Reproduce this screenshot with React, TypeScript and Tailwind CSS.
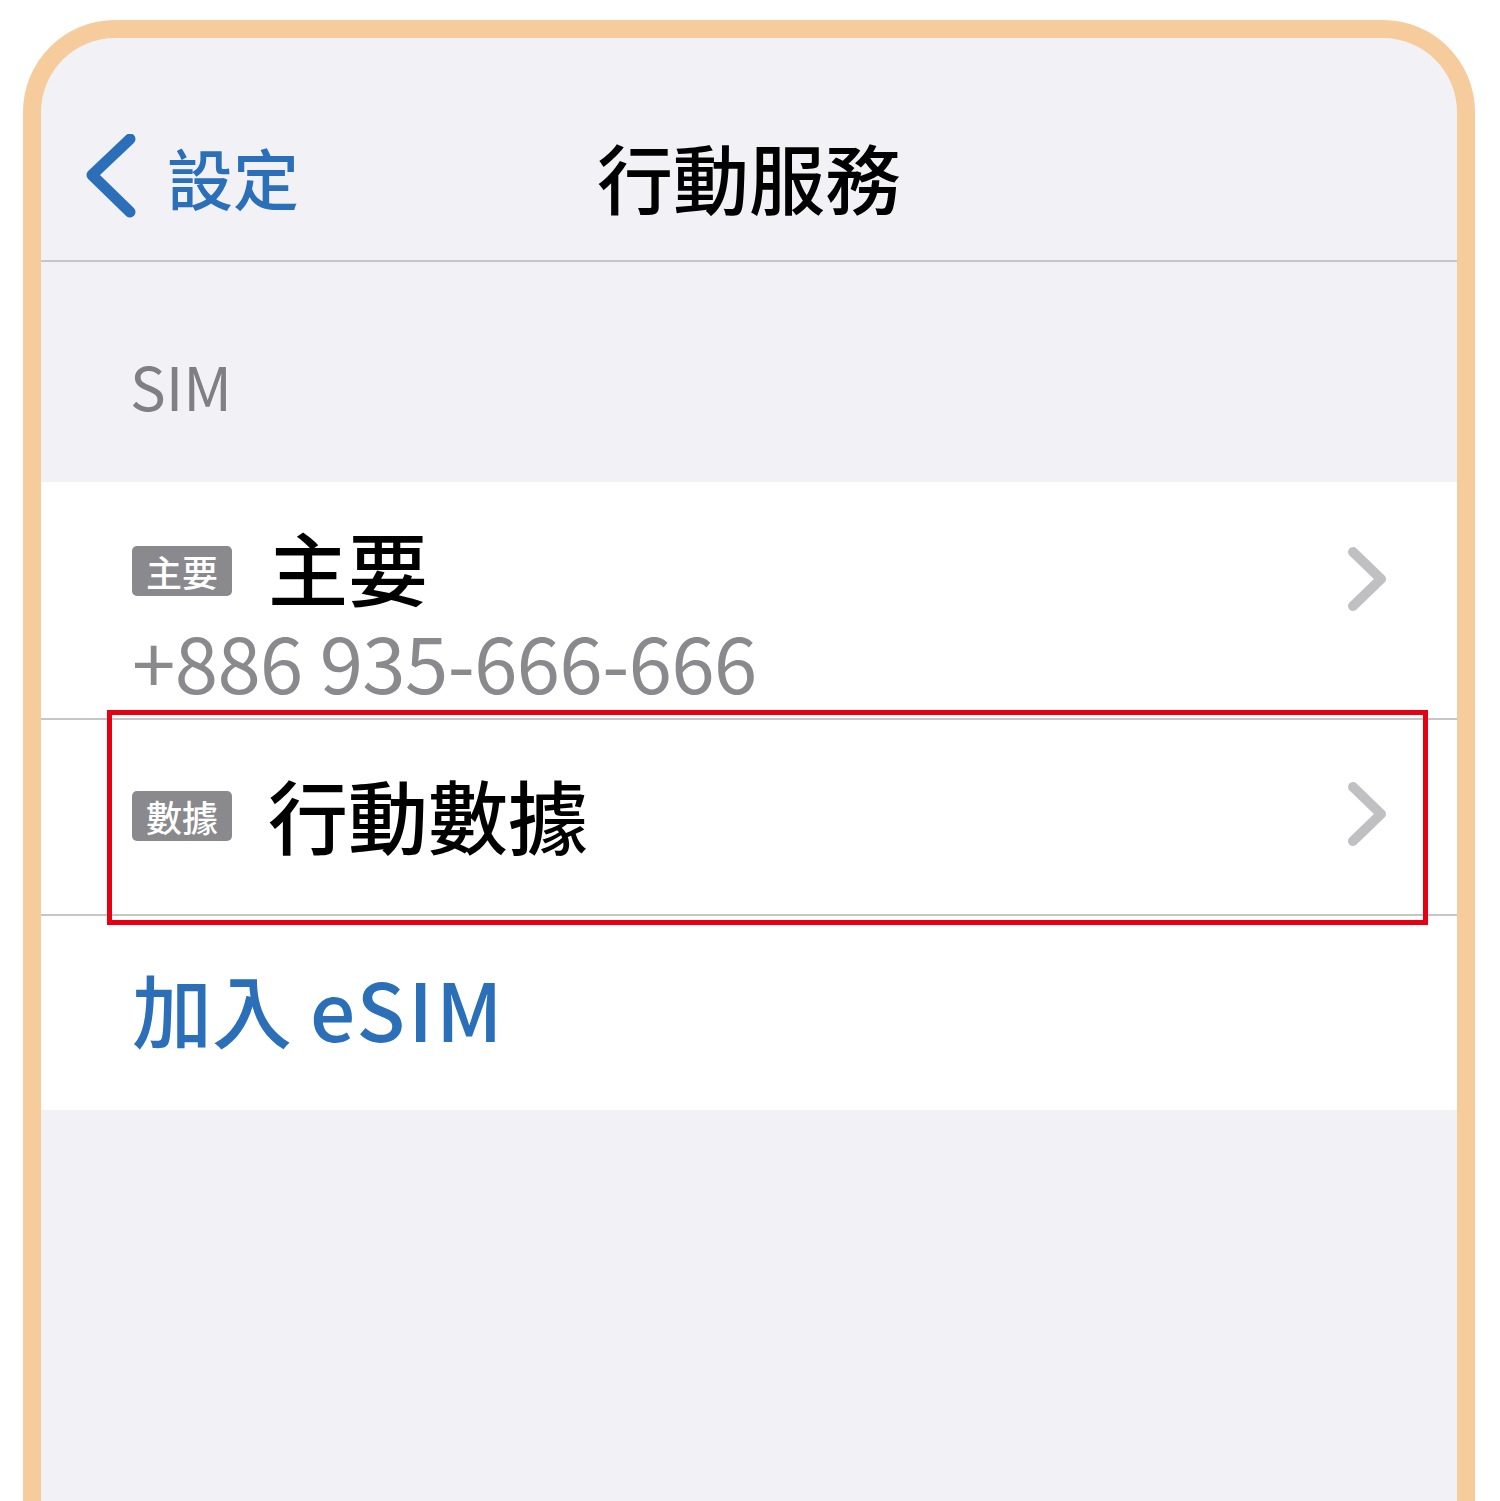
import React from 'react';

const font = { fontFamily: '"Noto Sans CJK TC", "Noto Sans", sans-serif' };

const ChevronRight: React.FC<{ className?: string }> = ({ className }) => (
  <svg className={className} width="46" height="72" viewBox="0 0 46 72" fill="none">
    <path d="M9 9 L37 36 L9 63" stroke="#c0c0c2" strokeWidth="10" strokeLinecap="round" strokeLinejoin="round" />
  </svg>
);

const Badge: React.FC<{ label: string; className?: string }> = ({ label, className }) => (
  <span
    className={`flex h-[50px] w-[100px] items-center justify-center rounded-[5px] bg-[#8a8a8e] text-[36px] font-medium leading-none text-white ${className ?? ''}`}
  >
    {label}
  </span>
);

export default function App() {
  return (
    <div className="min-h-[1501px] overflow-hidden bg-white pl-[23px] pt-[20px]" style={font}>
      <div className="min-h-[1520px] w-[1452px] rounded-t-[92px] border-[18px] border-b-0 border-[#f7cc9d] bg-[#f1f1f6]">
        {/* nav bar */}
        <div className="grid h-[224px] grid-cols-[1fr_auto_1fr] items-center border-b-2 border-[#c6c6c9] pt-[54px]">
          <div className="flex items-center pl-[45px]">
            <svg width="50" height="84" viewBox="0 0 50 84" fill="none">
              <path d="M44 5 L6 41 L44 78" stroke="#2a6fb8" strokeWidth="11" strokeLinecap="round" strokeLinejoin="round" />
            </svg>
            <span className="ml-[31px] text-[66px] font-medium leading-none text-[#2a6fb8]">設定</span>
          </div>
          <span className="text-[76px] font-medium leading-none text-black">行動服務</span>
          <div />
        </div>

        {/* section header */}
        <div className="h-[220px] pl-[89px] pt-[93px]">
          <span className="text-[60px] leading-none text-[#808084]">SIM</span>
        </div>

        {/* list */}
        <div className="bg-white">
          <div className="flex h-[236px] items-start justify-between pl-[91px] pr-[67px] pt-[43px]">
            <div className="flex flex-col gap-[16px]">
              <div className="flex items-center gap-[36px]">
                <Badge label="主要" className="mt-[12px]" />
                <span className="text-[80px] font-medium leading-none text-black">主要</span>
              </div>
              <span className="text-[78px] leading-none tracking-[-0.6px] text-[#8a8a8e]">+886 935-666-666</span>
            </div>
            <ChevronRight className="mt-[18px]" />
          </div>

          <div className="relative flex h-[196px] items-center justify-between border-t-2 border-[#c6c6c9] pl-[91px] pr-[67px]">
            <div className="flex items-center gap-[36px]">
              <Badge label="數據" className="-mt-[2px]" />
              <span className="-mt-[8px] text-[80px] font-medium leading-none text-black">行動數據</span>
            </div>
            <ChevronRight className="-mt-[6px]" />
            <div className="pointer-events-none absolute left-[66px] top-[-10px] h-[215px] w-[1321px] border-[5px] border-[#e60012]" />
          </div>

          <div className="flex h-[196px] items-center border-t-2 border-[#c6c6c9] pb-[12px] pl-[91px]">
            <span className="text-[80px] font-medium leading-none text-[#2a6fb8]">
              加入 <span className="tracking-[3px]">eSIM</span>
            </span>
          </div>
        </div>
      </div>
    </div>
  );
}
